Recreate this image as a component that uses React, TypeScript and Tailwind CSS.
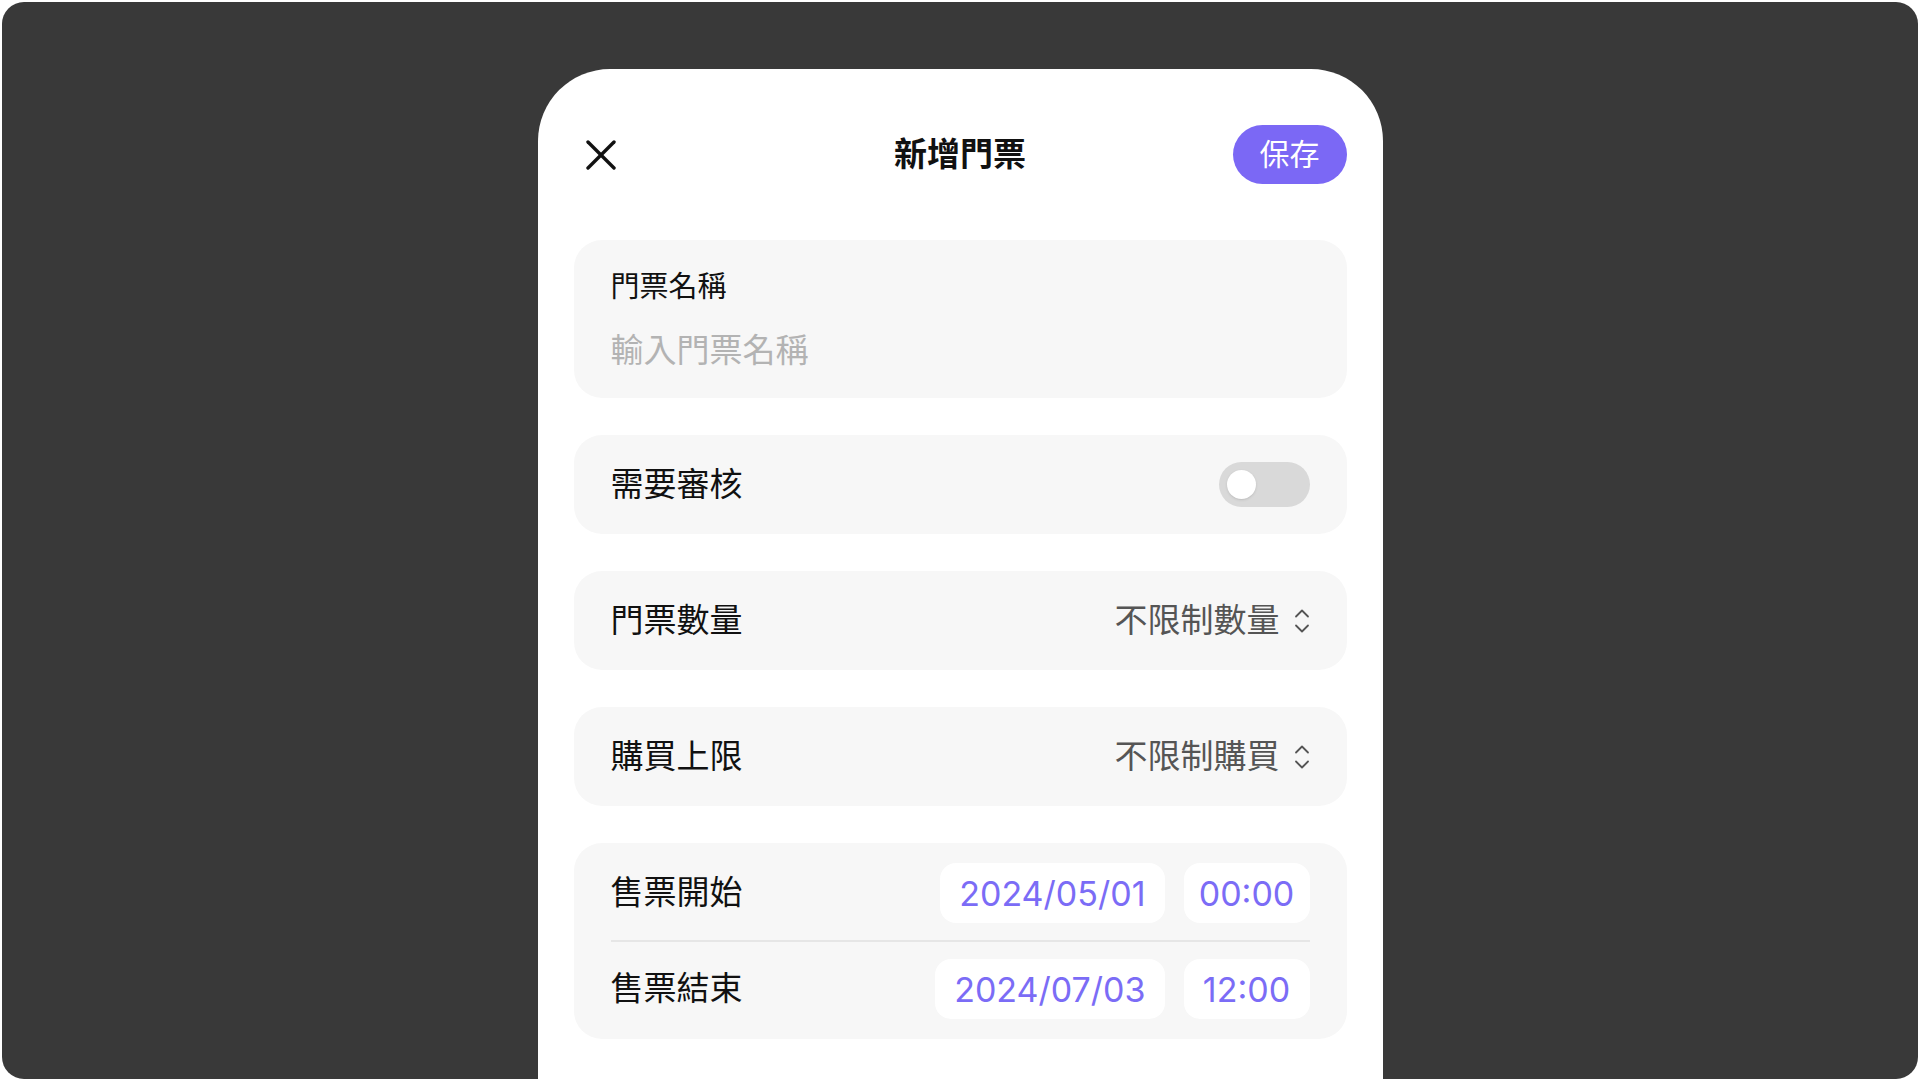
import React from 'react';

const font = { fontFamily: '"Inter", "Noto Sans CJK TC", sans-serif' };

const UpDown = () => (
  <svg width="16" height="28" viewBox="0 0 16 28" fill="none" stroke="currentColor" strokeWidth="1.8" strokeLinecap="round" strokeLinejoin="round">
    <path d="M2 9.5 L8 3.5 L14 9.5" />
    <path d="M2 18.5 L8 24.5 L14 18.5" />
  </svg>
);

const SelectRow = ({ label, value }: { label: string; value: string }) => (
  <div className="flex h-[99px] items-center justify-between rounded-[28px] bg-[#f7f7f7] px-[37px]">
    <span className="text-[33px] text-[#111]">{label}</span>
    <div className="flex items-center gap-[14px] text-[#555]">
      <span className="text-[33px]">{value}</span>
      <UpDown />
    </div>
  </div>
);

const DateRow = ({ label, date, time }: { label: string; date: string; time: string }) => (
  <div className="flex items-center justify-between">
    <span className="text-[33px] text-[#111]">{label}</span>
    <div className="flex items-center gap-[19px]">
      <div className="flex h-[60px] items-center rounded-[16px] bg-white px-[19px] text-[34px] text-[#7b6cf6]">
        {date}
      </div>
      <div className="flex h-[60px] w-[126px] items-center justify-center rounded-[16px] bg-white text-[34px] text-[#7b6cf6]">
        {time}
      </div>
    </div>
  </div>
);

const App = () => {
  return (
    <div className="h-[1081px] w-[1920px] overflow-hidden bg-white p-[2px]" style={font}>
      <div className="flex h-full justify-center overflow-hidden rounded-[22px] bg-[#393939] pt-[67px]">
        <div className="w-[845px] rounded-t-[72px] bg-white px-[36px] pt-[56px]">
          {/* Header */}
          <div className="grid h-[59px] grid-cols-[1fr_auto_1fr] items-center">
            <div className="pl-[12px]">
              <svg width="30" height="30" viewBox="0 0 30 30" stroke="#111" strokeWidth="3.4" strokeLinecap="round">
                <path d="M2 2 L28 28" />
                <path d="M28 2 L2 28" />
              </svg>
            </div>
            <h1 className="text-[33px] font-bold text-[#111]">新增門票</h1>
            <div className="flex justify-end">
              <button className="flex h-[59px] w-[114px] items-center justify-center rounded-full bg-[#7b68f5] text-[30px] text-white">
                保存
              </button>
            </div>
          </div>

          <div className="mt-[56px] flex flex-col gap-[37px]">
            {/* Ticket name */}
            <div className="flex h-[158px] flex-col justify-center gap-[33px] rounded-[28px] bg-[#f7f7f7] px-[37px]">
              <span className="text-[29px] leading-none text-[#111]">門票名稱</span>
              <span className="text-[33px] leading-none text-[#b3b3b3]">輸入門票名稱</span>
            </div>

            {/* Approval toggle */}
            <div className="flex h-[99px] items-center justify-between rounded-[28px] bg-[#f7f7f7] px-[37px]">
              <span className="text-[33px] text-[#111]">需要審核</span>
              <div className="flex h-[45px] w-[91px] items-center rounded-full bg-[#d9d9d9] px-[8px]">
                <div className="h-[29px] w-[29px] rounded-full bg-white shadow-sm" />
              </div>
            </div>

            <SelectRow label="門票數量" value="不限制數量" />
            <SelectRow label="購買上限" value="不限制購買" />

            {/* Sale period */}
            <div className="rounded-[28px] bg-[#f7f7f7] px-[37px] py-[20px]">
              <DateRow label="售票開始" date="2024/05/01" time="00:00" />
              <div className="my-[17px] h-[2px] bg-[#e6e6e6]" />
              <DateRow label="售票結束" date="2024/07/03" time="12:00" />
            </div>
          </div>
        </div>
      </div>
    </div>
  );
};

export default App;
